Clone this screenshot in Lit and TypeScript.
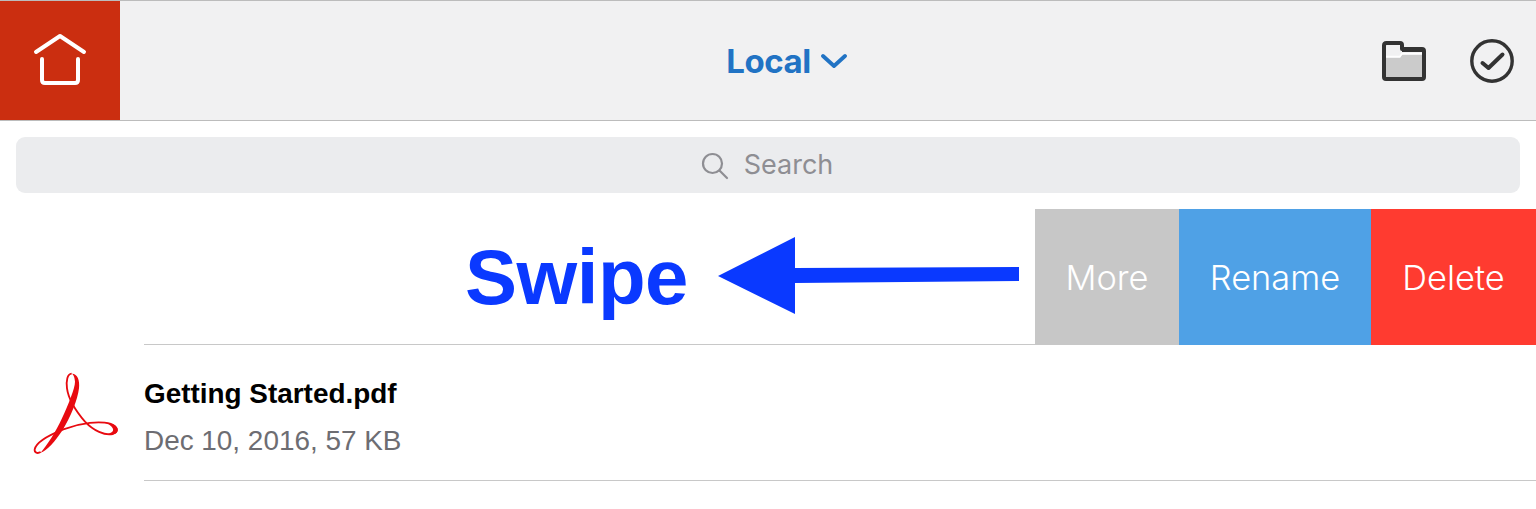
import { LitElement, html, css } from "lit";
import { customElement } from "lit/decorators.js";

@customElement("app-root")
export class AppRoot extends LitElement {
  static styles = css`
    :host { display: block; width: 1536px; height: 509px; overflow: hidden; background: #fff; font-family: Inter, "Liberation Sans", sans-serif; }
    .header { display: flex; align-items: center; height: 119px; background: #f1f1f2; border-top: 1px solid #bcbcbc; border-bottom: 1px solid #bcbcbc; }
    .home { width: 120px; height: 119px; background: #cb2e10; flex: none; }
    .title { flex: 1; display: flex; align-items: center; justify-content: center; gap: 10px; color: #2173c4; font-size: 33px; font-weight: 700; letter-spacing: -0.4px; padding-left: 71px; }
    .tools { display: flex; align-items: center; gap: 44px; padding-right: 22px; }
    svg { display: block; }
    .search-wrap { padding: 16px 16px; }
    .search { height: 56px; border-radius: 9px; background: #ebecee; display: flex; align-items: center; justify-content: center; gap: 15px; color: #8e8e93; font-size: 27px; padding-right: 2px; line-height: 54px; }
    .search svg { margin-top: 1px; }
    .swipe-row { height: 136px; display: flex; }
    .swipe-main { flex: 1; margin-left: 144px; border-bottom: 1px solid #c8c8c8; display: flex; align-items: center; justify-content: flex-end; gap: 30px; padding-right: 16px; }
    .swipe { font-family: "Liberation Sans", Arial, sans-serif; font-weight: 700; font-size: 78px; color: #0a39ff; line-height: 1; letter-spacing: -0.5px; }
    .arrow { margin-bottom: 2px; }
    .action { height: 136px; display: flex; align-items: center; justify-content: center; color: #fff; font-size: 34.4px; font-weight: 300; flex: none; }
    .more { width: 144px; background: #c7c7c7; }
    .rename { width: 192px; background: #4fa1e6; }
    .delete { width: 165px; background: #ff3b30; }
    .file { height: 136px; display: flex; }
    .pdf { width: 144px; flex: none; box-sizing: border-box; padding: 15px 0 0 10px; }
    .info { flex: 1; border-bottom: 1px solid #c8c8c8; display: flex; flex-direction: column; justify-content: center; gap: 15px; padding-top: 9px; font-family: "Liberation Sans", Arial, sans-serif; }
    .name { font-size: 27.9px; font-weight: 700; color: #000; }
    .meta { font-size: 27.9px; color: #6d6d72; }
  `;

  render() {
    return html`
      <div class="header">
        <div class="home">
          <svg width="120" height="119" viewBox="0 0 120 119" fill="none" stroke="#fff" stroke-width="4" stroke-linecap="round" stroke-linejoin="round">
            <path d="M36 51 L60 35 L84 51" />
            <path d="M42 58 V79 Q42 82 45 82 H75 Q78 82 78 79 V58" />
          </svg>
        </div>
        <div class="title">
          <span>Local</span>
          <svg width="26" height="16" viewBox="0 0 26 16" fill="none" stroke="#2173c4" stroke-width="3.8" stroke-linecap="round" stroke-linejoin="round"><path d="M2 3 L13 13 L24 3" /></svg>
        </div>
        <div class="tools">
          <svg width="44" height="40" viewBox="0 0 44 40">
            <path d="M2 5 Q2 2 5 2 H18 Q20 2 20 5 V7 H40 Q42 7 42 9 V36 Q42 38 40 38 H4 Q2 38 2 36 Z" fill="#f1f1f2" />
            <path d="M2 17 H18 L20 14 H42 V38 H2 Z" fill="#cbcbcb" />
            <path d="M2 15.5 H18 L20 12.5 H42" fill="none" stroke="#fff" stroke-width="1.6" />
            <path d="M2 4.5 Q2 2 4.5 2 H18 Q20 2 20 4 V8 H40 Q42 8 42 10 V36 Q42 38 40 38 H4 Q2 38 2 36 Z" fill="none" stroke="#333" stroke-width="4" stroke-linejoin="round" />
            <path d="M20 9.5 H42" stroke="#333" stroke-width="3" />
          </svg>
          <svg width="44" height="44" viewBox="0 0 44 44" fill="none" stroke="#333" stroke-linecap="round" stroke-linejoin="round">
            <circle cx="22" cy="22" r="20.2" stroke-width="3.4" />
            <path d="M12.5 24 L18.5 29 L32.5 15.5" stroke-width="4" />
          </svg>
        </div>
      </div>
      <div class="search-wrap">
        <div class="search">
          <svg width="28" height="28" viewBox="0 0 28 28" fill="none" stroke="#8e8e93" stroke-width="2.2" stroke-linecap="round"><circle cx="11.5" cy="11.5" r="9.5" /><path d="M18.5 18.5 L26 26" /></svg>
          <span>Search</span>
        </div>
      </div>
      <div class="swipe-row">
        <div class="swipe-main">
          <span class="swipe">Swipe</span>
          <svg class="arrow" width="301" height="77" viewBox="0 0 301 77"><path d="M0 39 L77 0 V31 L301 30 V44 L77 46 V77 Z" fill="#0a39ff" /></svg>
        </div>
        <div class="action more">More</div>
        <div class="action rename">Rename</div>
        <div class="action delete">Delete</div>
      </div>
      <div class="file">
        <div class="pdf">
          <svg width="130" height="110" viewBox="0 0 390 330" fill="none">
            <path d="M185 41 C172 42 168 62 171 85 C175 115 195 150 225 185 C250 212 285 228 308 222 C326 216 326 200 300 191 C270 183 215 187 160 208 C115 226 78 248 74 268 C73 278 82 282 92 276" stroke="#e80a10" stroke-width="5.5" />
            <path d="M185 41 C202 40 210 60 207 85 C203 120 182 170 158 210 C136 243 110 274 92 278 C110 258 138 215 156 175 C174 135 195 85 195 65 C194 50 190 43 185 41 Z" fill="#e80a10" />
            <path d="M285 187 C315 190 328 205 322 215 C316 225 300 226 288 222 C305 220 316 212 305 200 C298 194 292 190 285 187 Z" fill="#e80a10" />
          </svg>
        </div>
        <div class="info">
          <div class="name">Getting Started.pdf</div>
          <div class="meta">Dec 10, 2016, 57 KB</div>
        </div>
      </div>
    `;
  }
}
